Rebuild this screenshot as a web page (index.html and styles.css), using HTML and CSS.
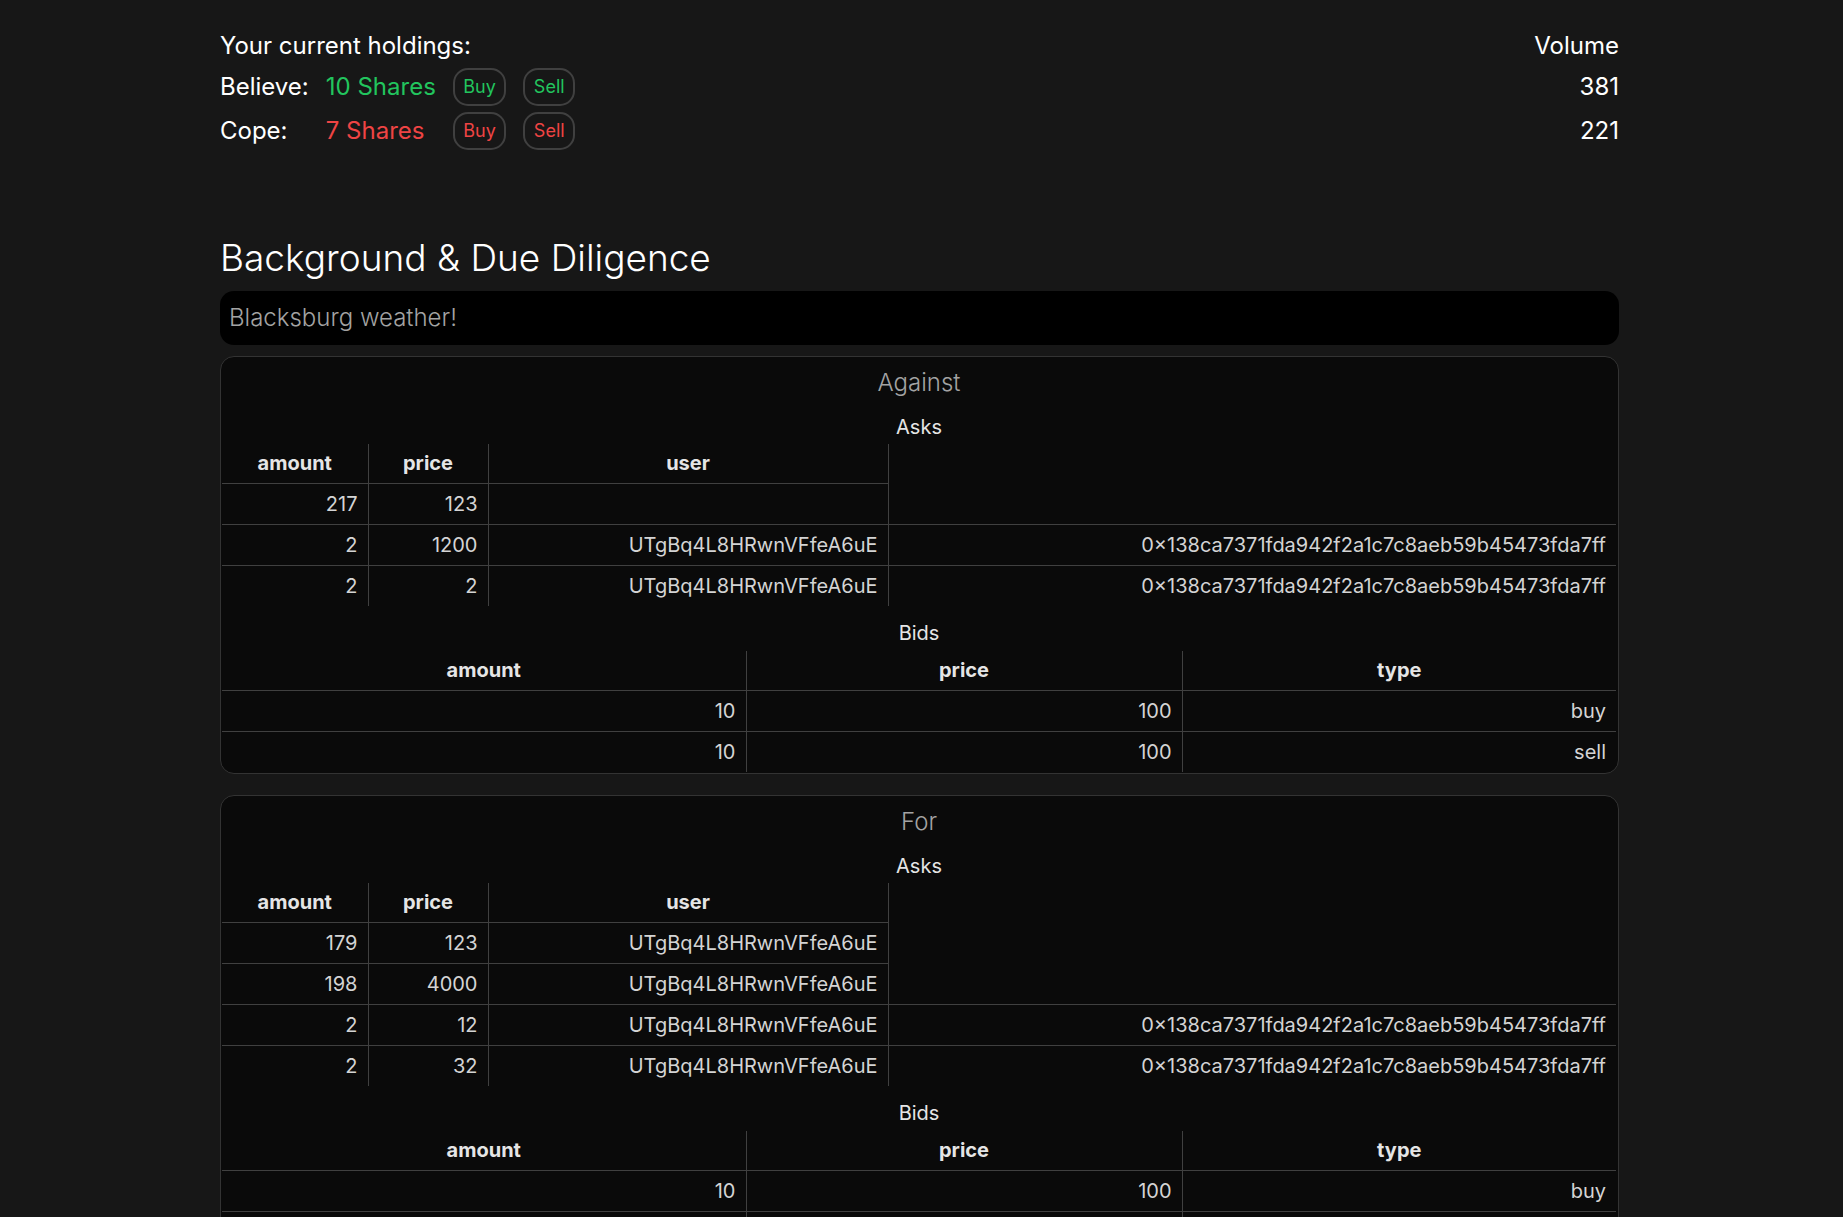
FILE: index.html
```html
<!DOCTYPE html>
<html lang="en">
<head>
<meta charset="utf-8">
<title>Market</title>
<link rel="stylesheet" href="styles.css">
</head>
<body>
<div class="page">
  <div class="top">
    <div class="holdings">
      <div class="hold-title">Your current holdings:</div>
      <div class="label">Believe:</div>
      <div class="shares green">10 Shares</div>
      <button class="btn green">Buy</button>
      <button class="btn green">Sell</button>
      <div class="label">Cope:</div>
      <div class="shares red">7 Shares</div>
      <button class="btn red">Buy</button>
      <button class="btn red">Sell</button>
    </div>
    <div class="volume">
      <div class="vol-title">Volume</div>
      <div class="vol-val">381</div>
      <div class="vol-val">221</div>
    </div>
  </div>

  <h2 class="heading">Background &amp; Due Diligence</h2>
  <div class="desc">Blacksburg weather!</div>

  <section class="card">
    <div class="card-title">Against</div>
    <table class="book asks">
      <caption>Asks</caption>
      <colgroup><col class="a1"><col class="a2"><col class="a3"><col class="a4"></colgroup>
      <thead><tr><th>amount</th><th>price</th><th>user</th><th class="blank"></th></tr></thead>
      <tbody>
        <tr><td>217</td><td>123</td><td></td></tr>
        <tr><td>2</td><td>1200</td><td>UTgBq4L8HRwnVFfeA6uE</td><td>0×138ca7371fda942f2a1c7c8aeb59b45473fda7ff</td></tr>
        <tr><td>2</td><td>2</td><td>UTgBq4L8HRwnVFfeA6uE</td><td>0×138ca7371fda942f2a1c7c8aeb59b45473fda7ff</td></tr>
      </tbody>
    </table>
    <table class="book bids">
      <caption>Bids</caption>
      <colgroup><col class="b1"><col class="b2"><col class="b3"></colgroup>
      <thead><tr><th>amount</th><th>price</th><th>type</th></tr></thead>
      <tbody>
        <tr><td>10</td><td>100</td><td>buy</td></tr>
        <tr><td>10</td><td>100</td><td>sell</td></tr>
      </tbody>
    </table>
  </section>

  <section class="card">
    <div class="card-title">For</div>
    <table class="book asks">
      <caption>Asks</caption>
      <colgroup><col class="a1"><col class="a2"><col class="a3"><col class="a4"></colgroup>
      <thead><tr><th>amount</th><th>price</th><th>user</th><th class="blank"></th></tr></thead>
      <tbody>
        <tr><td>179</td><td>123</td><td>UTgBq4L8HRwnVFfeA6uE</td></tr>
        <tr><td>198</td><td>4000</td><td>UTgBq4L8HRwnVFfeA6uE</td></tr>
        <tr><td>2</td><td>12</td><td>UTgBq4L8HRwnVFfeA6uE</td><td>0×138ca7371fda942f2a1c7c8aeb59b45473fda7ff</td></tr>
        <tr><td>2</td><td>32</td><td>UTgBq4L8HRwnVFfeA6uE</td><td>0×138ca7371fda942f2a1c7c8aeb59b45473fda7ff</td></tr>
      </tbody>
    </table>
    <table class="book bids">
      <caption>Bids</caption>
      <colgroup><col class="b1"><col class="b2"><col class="b3"></colgroup>
      <thead><tr><th>amount</th><th>price</th><th>type</th></tr></thead>
      <tbody>
        <tr><td>10</td><td>100</td><td>buy</td></tr>
        <tr><td>10</td><td>100</td><td>sell</td></tr>
      </tbody>
    </table>
  </section>
</div>
</body>
</html>
```

FILE: styles.css
```css
html, body {
  margin: 0;
  padding: 0;
  background: #171717;
  color: #ffffff;
  font-family: Inter, "Noto Sans", sans-serif;
}

.page {
  width: 1399px;
  margin: 0 0 0 220px;
  padding-bottom: 40px;
}

.top {
  display: flex;
  justify-content: space-between;
  align-items: flex-start;
  padding-top: 30px;
  font-size: 24px;
}

.holdings {
  display: grid;
  grid-template-columns: auto auto auto auto;
  grid-template-rows: 32px 38px 38px;
  column-gap: 17px;
  row-gap: 6px;
  align-items: center;
  justify-items: start;
}

.hold-title {
  grid-column: 1 / -1;
  line-height: 32px;
}

.label, .shares {
  line-height: 32px;
}

.green { color: #22c55e; }
.red { color: #ef4444; }

.btn {
  font-family: Inter, "Noto Sans", sans-serif;
  font-size: 18px;
  height: 38px;
  padding: 0 8.5px;
  background: transparent;
  border: 2px solid #404040;
  border-radius: 15px;
  line-height: 34px;
}

.volume {
  display: grid;
  grid-template-rows: 32px 38px 38px;
  row-gap: 6px;
  justify-items: end;
  align-items: center;
}

.vol-title, .vol-val {
  line-height: 32px;
}

.heading {
  font-family: Inter, "Noto Sans", sans-serif;
  font-weight: 300;
  font-size: 37px;
  line-height: 40px;
  margin: 88px 0 0 0;
  color: #ffffff;
}

.desc {
  margin-top: 13px;
  background: #000000;
  border-radius: 14px;
  padding: 11px 9px;
  font-family: Inter, "Noto Sans", sans-serif;
  font-weight: 300;
  font-size: 24px;
  line-height: 32px;
  color: #a3a3a3;
}

.card {
  margin-top: 11px;
  background: #0a0a0a;
  border: 1px solid #333333;
  border-radius: 14px;
  padding: 10px 2px 1px 1px;
}

.card + .card {
  margin-top: 21px;
}

.card-title {
  text-align: center;
  font-family: Inter, "Noto Sans", sans-serif;
  font-weight: 300;
  font-size: 24px;
  line-height: 32px;
  color: #a3a3a3;
}

.book {
  width: 100%;
  border-collapse: collapse;
  table-layout: fixed;
  font-size: 20px;
  color: #d4d4d4;
}

.book caption {
  font-size: 20px;
  line-height: 28px;
  color: #e5e5e5;
  padding-bottom: 3px;
}

.asks caption { padding-top: 14px; }
.bids caption { padding-top: 13px; padding-bottom: 4px; }

.a1 { width: 146px; }
.a2 { width: 120px; }
.a3 { width: 400px; }
.a4 { width: auto; }

.b1 { width: 524px; }
.b2 { width: 436px; }
.b3 { width: auto; }

.book th {
  font-weight: 700;
  color: #e5e5e5;
  text-align: center;
  line-height: 28px;
  padding: 5px 11px 6px;
}

.book td {
  text-align: right;
  line-height: 28px;
  padding: 6px 10px 6px 11px;
  border-top: 1px solid #404040;
  white-space: nowrap;
}

.asks th:nth-child(-n+3),
.asks td:nth-child(-n+3) {
  border-right: 1px solid #404040;
}

.bids th:nth-child(-n+2),
.bids td:nth-child(-n+2) {
  border-right: 1px solid #404040;
}

.book th.blank {
  border: none;
}
```
